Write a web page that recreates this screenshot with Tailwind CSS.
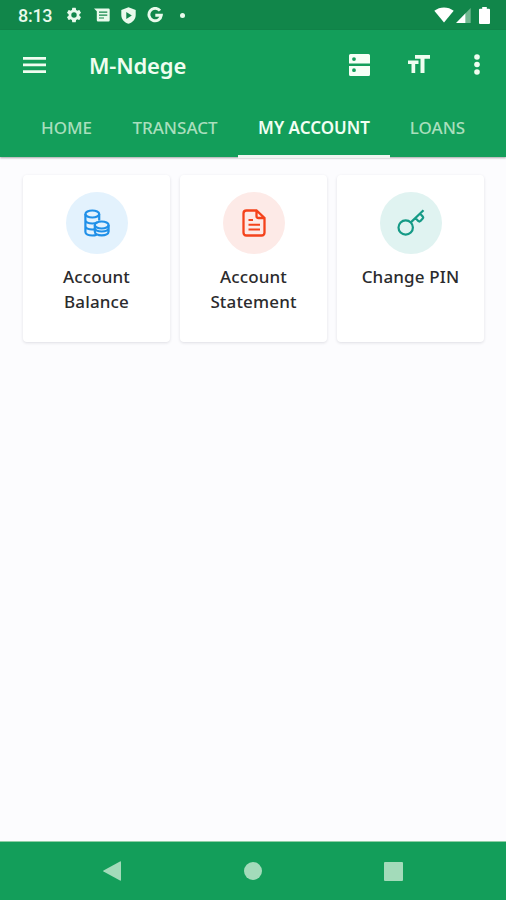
<!DOCTYPE html>
<html lang="en">
<head>
  <meta charset="UTF-8" />
  <meta name="viewport" content="width=device-width, initial-scale=1.0" />
  <title>M-Ndege</title>
  <script src="https://cdn.jsdelivr.net/npm/@tailwindcss/browser@4"></script>
</head>
<body class="bg-[#fcfcfe] font-['Noto_Sans',sans-serif]">
  <div class="flex flex-col h-[900px] w-[506px] overflow-hidden">

    <!-- Status bar -->
    <div class="flex items-center h-[30px] bg-[#11864a] text-[#e9faec] shrink-0 pl-[18px] pr-4">
      <span class="w-[47px] text-[18px] leading-[30px] font-medium tracking-[-0.3px] font-['Roboto',sans-serif] pt-[2px]">8:13</span>
      <svg class="w-[18px] h-[18px]" viewBox="0 0 24 24" fill="currentColor"><path d="M19.14 12.94c.04-.3.06-.61.06-.94 0-.32-.02-.64-.07-.94l2.03-1.58a.49.49 0 0 0 .12-.61l-1.92-3.32a.49.49 0 0 0-.59-.22l-2.39.96c-.5-.38-1.03-.7-1.62-.94l-.36-2.54a.48.48 0 0 0-.48-.41h-3.84a.48.48 0 0 0-.47.41l-.36 2.54c-.59.24-1.13.57-1.62.94l-2.39-.96a.48.48 0 0 0-.59.22L2.74 8.87a.48.48 0 0 0 .12.61l2.03 1.58c-.05.3-.09.63-.09.94s.02.64.07.94l-2.03 1.58a.49.49 0 0 0-.12.61l1.92 3.32c.12.22.37.29.59.22l2.39-.96c.5.38 1.03.7 1.62.94l.36 2.54c.05.24.24.41.48.41h3.84c.24 0 .44-.17.47-.41l.36-2.54c.59-.24 1.13-.56 1.62-.94l2.39.96c.22.08.47 0 .59-.22l1.92-3.32a.48.48 0 0 0-.12-.61zM12 15.6a3.6 3.6 0 1 1 0-7.2 3.6 3.6 0 0 1 0 7.2z"/></svg>
      <svg class="w-4 h-[14px] ml-[11px]" viewBox="0 0 16 14" fill="currentColor"><path fill-rule="evenodd" d="M0 .5h14.500q1.200 0 1.200 1.200v10.600q0 1.200-1.200 1.200H4q-1.200 0-1.200-1.200V3.200zM5 3.600v1.200h8.300V3.600zM5 6.500v1.200h8.300V6.500zM5 9.400v1.200h5V9.400z"/></svg>
      <svg class="w-[15px] h-[17px] ml-[11px]" viewBox="0 0 15 17" fill="currentColor"><path fill-rule="evenodd" d="M7.500.3 14.700 3v5c0 4-3 7.500-7.200 8.800C3.300 15.500.3 12 .3 8V3zM5.300 5v7l5.500-3.500z"/></svg>
      <svg class="w-4 h-4 ml-[11px]" viewBox="0 0 16 16" fill="none" stroke="currentColor" stroke-width="2.900"><path d="M13 3.700A6.200 6.200 0 1 0 14.300 8.300H8.300"/></svg>
      <span class="w-[5px] h-[5px] rounded-full bg-current ml-[17px]"></span>
      <svg class="w-5 h-4 ml-auto" viewBox="0 0 20 16" fill="#fff"><path d="M.3 3.800C5.800-.7 14.200-.7 19.700 3.800L10 15.500z"/></svg>
      <svg class="w-[15px] h-[15px] ml-[2px] mt-[1px]" viewBox="0 0 15 15"><path fill="#70b890" d="M9.500 5.200 14.700 0v15H9.500z"/><path fill="#fff" d="M0 15 9.500 5.300V15z"/></svg>
      <svg class="w-[11px] h-[17px] ml-[8px]" viewBox="0 0 11 17" fill="#fff"><path d="M3.200 0h4.600v1.800H10q1 0 1 1V16q0 1-1 1H1q-1 0-1-1V2.800q0-1 1-1h2.200z"/></svg>
    </div>

    <!-- App bar -->
    <header class="bg-[#139e5a] shrink-0 h-[127px] shadow-[0_1px_2px_rgba(0,0,0,0.35)] relative">
      <div class="flex items-center h-[70px] pl-[23px] pr-[26px] text-[#effdf0]">
        <svg class="w-[23px] h-4" viewBox="0 0 23 16" fill="currentColor"><path d="M0 0h23v2.700H0zM0 6.600h23v2.700H0zM0 13.200h23v2.700H0z"/></svg>
        <h1 class="ml-[43px] text-[22px] leading-[30px] font-semibold tracking-[-0.15px] w-[100px] whitespace-nowrap">M-Ndege</h1>
        <svg class="w-[21px] h-[22px] ml-auto" viewBox="0 0 21 22" fill="#f6fff6"><path fill-rule="evenodd" d="M1.500 0h18q1.500 0 1.500 1.500v8H0v-8Q0 0 1.500 0zM5 3.200a1.900 1.900 0 1 0 0 3.800 1.900 1.900 0 0 0 0-3.800zM0 12h21v8.500q0 1.500-1.500 1.500h-18Q0 22 0 20.500zM5 14.300a1.900 1.900 0 1 0 0 3.800 1.900 1.900 0 0 0 0-3.800z"/></svg>
        <svg class="w-[22px] h-[18px] ml-[38px] mb-[3px]" viewBox="0 0 22 18" fill="currentColor"><path d="M7 0h15v3.700h-5.500V18h-4V3.700H7zM0 5.500h10.500V9H7.200v9H3.500V9H0z"/></svg>
        <svg class="w-[6px] h-[21px] ml-[44px] mb-[2px]" viewBox="0 0 6 21" fill="currentColor"><circle cx="3" cy="3" r="2.800"/><circle cx="3" cy="10.500" r="2.800"/><circle cx="3" cy="18" r="2.800"/></svg>
      </div>
      <nav class="flex h-[58px] pl-[21px] text-[17px] leading-6 font-medium text-[#a9dfbd] text-center whitespace-nowrap">
        <a class="w-[91px] pt-4">HOME</a>
        <a class="w-[126px] pt-4">TRANSACT</a>
        <a class="w-[152px] pt-4 font-semibold text-[#f2fff3] border-b-[3px] border-[#f0f5f1]">MY ACCOUNT</a>
        <a class="w-[95px] pt-4">LOANS</a>
      </nav>
    </header>

    <!-- Account actions -->
    <main class="flex-1 pl-[23px] pr-[22px] pt-[18px]">
      <div class="grid grid-cols-3 gap-[10px] text-[17px] leading-[25px] font-medium tracking-[0.15px] text-[#2b2b2d] text-center">
        <div class="flex flex-col items-center h-[167px] pt-[17px] bg-white rounded-[4px] shadow-[0_1px_3px_rgba(40,40,70,0.14)]">
          <div class="w-[62px] h-[62px] rounded-full bg-[#e3f2fd] flex items-center justify-center mb-[10px]">
            <svg class="w-7 h-7" viewBox="0 0 28 28" fill="none" stroke="#2090e8" stroke-width="2.200">
              <ellipse cx="9.300" cy="5" rx="6.900" ry="3.500"/>
              <path d="M2.400 5v18c0 2 3 3.500 7 3.500 1.600 0 3-.3 4.200-.8M16.200 5v6.500M2.400 11c0 2 3 3.500 7 3.500 2 0 3.500-.3 4.700-1M2.400 17c0 2 3 3.500 7 3.500.8 0 1.600 0 2.300-.2"/>
              <ellipse cx="18.700" cy="16" rx="6.900" ry="3.500"/>
              <path d="M11.800 16v6.500c0 2.200 3 3.800 6.900 3.800s6.900-1.600 6.900-3.800V16M11.800 19c0 2 3 3.500 6.900 3.500s6.900-1.500 6.900-3.500"/>
            </svg>
          </div>
          <p>Account<br>Balance</p>
        </div>
        <div class="flex flex-col items-center h-[167px] pt-[17px] bg-white rounded-[4px] shadow-[0_1px_3px_rgba(40,40,70,0.14)]">
          <div class="w-[62px] h-[62px] rounded-full bg-[#fdeae7] flex items-center justify-center mb-[10px]">
            <svg class="w-7 h-7" viewBox="0 0 28 28" fill="none" stroke="#f4431c" stroke-width="2.300">
              <path d="M16.500 1.500H6.500q-3 0-3 3v19q0 3 3 3h15q3 0 3-3V9zM16.500 1.500V7q0 2 2 2h6"/>
              <path d="M8.500 11H13M8.500 15.700h11.500M8.500 20.500h11.500" stroke-width="2"/>
            </svg>
          </div>
          <p>Account<br>Statement</p>
        </div>
        <div class="flex flex-col items-center h-[167px] pt-[17px] bg-white rounded-[4px] shadow-[0_1px_3px_rgba(40,40,70,0.14)]">
          <div class="w-[62px] h-[62px] rounded-full bg-[#e0f3f1] flex items-center justify-center mb-[10px]">
            <svg class="w-7 h-7" viewBox="0 0 28 28" fill="none" stroke="#159a86" stroke-width="2.200">
              <circle cx="8.700" cy="18.500" r="7.200"/>
              <path d="M13.800 13.400 26.500 1.300M23 4.500l2.700 3q1 1.200-.2 2.300L23.500 12q-1.200 1-2.300 0l-2.700-3"/>
            </svg>
          </div>
          <p>Change PIN</p>
        </div>
      </div>
    </main>

    <!-- Navigation bar -->
    <footer class="flex items-center h-[59px] shrink-0 bg-[#139e5a] border-t border-[#8fcfa5] pl-[103px] pr-[103px] justify-between">
      <svg class="w-[18px] h-5" viewBox="0 0 18 20" fill="#a3dbba"><path d="M17 .5q1-.5 1 .7v17.600q0 1.200-1 .7L.5 10.500q-.6-.5 0-1z"/></svg>
      <span class="w-[18px] h-[18px] rounded-full bg-[#a3dbba]"></span>
      <span class="w-[19px] h-[19px] rounded-[1px] bg-[#a3dbba]"></span>
    </footer>
  </div>
</body>
</html>
